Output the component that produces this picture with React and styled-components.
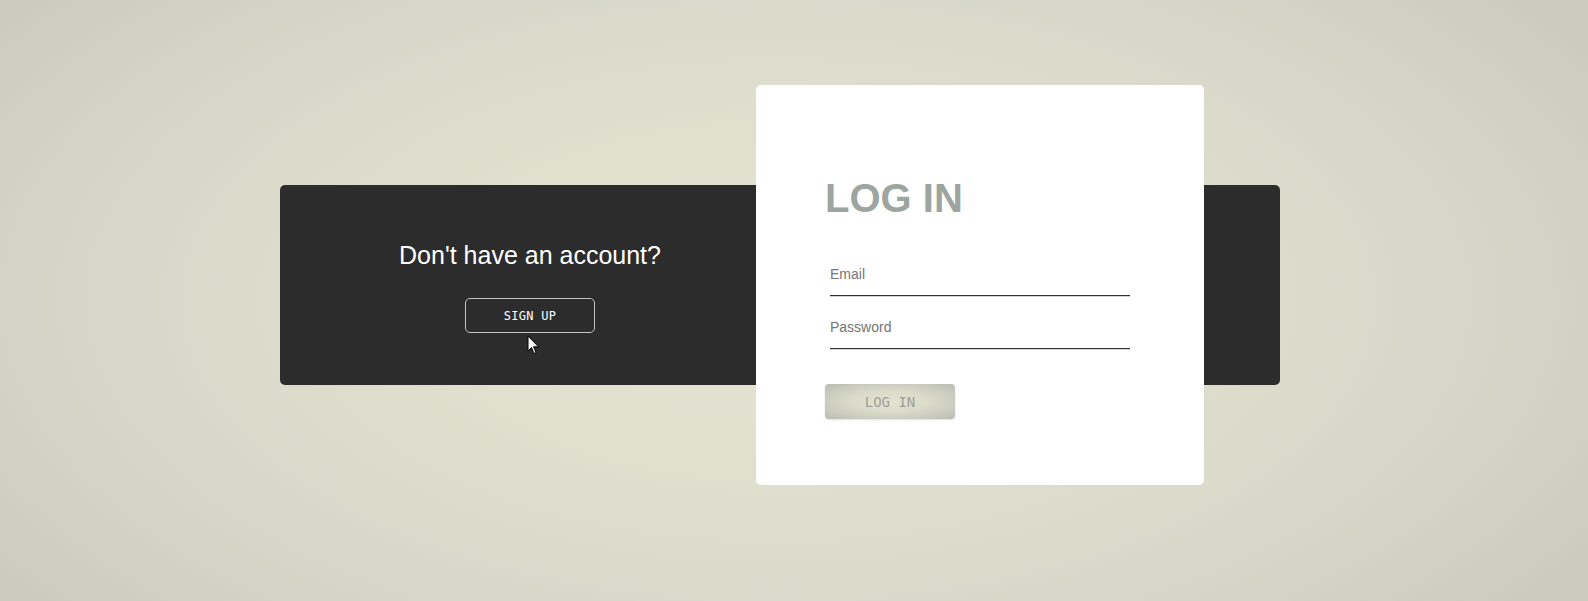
import React from 'react';
import styled, { createGlobalStyle } from 'styled-components';

const GlobalStyle = createGlobalStyle`
  html, body, #root {
    margin: 0;
    height: 100%;
  }
  body {
    font-family: 'Liberation Sans', Arial, sans-serif;
  }
`;

const Page = styled.div`
  box-sizing: border-box;
  height: 100vh;
  padding: 185px 0 0 280px;
  background: radial-gradient(
    ellipse 60% 80% at 49% 50%,
    #e3e2d2 0%,
    #e1e0cf 35%,
    #dbdacb 58%,
    #d3d4c7 80%,
    #cbccbf 100%
  );
  overflow: hidden;
`;

const Panel = styled.div`
  position: relative;
  width: 1000px;
  height: 200px;
  border-radius: 5px;
  background: #2c2c2c;
  display: grid;
  grid-template-columns: 500px 500px;
`;

const Side = styled.div`
  display: flex;
  flex-direction: column;
  align-items: center;
  padding-top: 56px;
`;

const Prompt = styled.h2`
  margin: 0;
  font-family: 'Liberation Sans', Arial, sans-serif;
  font-size: 25px;
  font-weight: 400;
  color: #ffffff;
`;

const OutlineButton = styled.button`
  margin-top: 28px;
  width: 130px;
  height: 35px;
  border: 1px solid #c4c4c4;
  border-radius: 5px;
  background: transparent;
  color: #ffffff;
  font-family: 'DejaVu Sans Mono', monospace;
  font-size: 12px;
  letter-spacing: 0.3px;
  cursor: pointer;
`;

const Card = styled.form`
  position: absolute;
  left: 476px;
  top: -100px;
  box-sizing: border-box;
  width: 448px;
  height: 400px;
  padding-left: 69px;
  border-radius: 5px;
  background: #ffffff;
  display: flex;
  flex-direction: column;
  align-items: flex-start;
`;

const Title = styled.h1`
  margin: 91px 0 0;
  font-family: 'Liberation Sans', Arial, sans-serif;
  font-size: 40px;
  font-weight: 700;
  color: #9ca5a0;
`;

const Field = styled.input`
  box-sizing: content-box;
  width: 300px;
  margin: ${p => (p.$first ? '33px' : '11px')} 0 0 5px;
  padding: 12px 0 13px;
  border: none;
  border-bottom: 1px solid #333333;
  box-shadow: 0 1px 0 #d4d4d4;
  outline: none;
  background: transparent;
  font-family: 'Liberation Sans', Arial, sans-serif;
  font-size: 14px;
  color: #333;
  &::placeholder {
    color: #757575;
  }
`;

const SubmitButton = styled.button`
  margin-top: 35px;
  width: 130px;
  height: 35px;
  border: none;
  border-radius: 4px;
  background: radial-gradient(
    ellipse at center,
    #e4e3d1 0%,
    #dcdccb 40%,
    #c9cbbe 75%,
    #b8bbb2 100%
  );
  box-shadow: 0 1px 2px rgba(0, 0, 0, 0.12);
  color: #9aa09c;
  font-family: 'DejaVu Sans Mono', monospace;
  font-size: 14px;
  cursor: pointer;
`;

const Pointer = styled.svg`
  position: absolute;
  left: 247px;
  top: 150px;
  width: 13px;
  height: 20px;
  pointer-events: none;
`;

export default function App() {
  return (
    <>
      <GlobalStyle />
      <Page>
        <Panel>
          <Side>
            <Prompt>Don't have an account?</Prompt>
            <OutlineButton type="button">SIGN UP</OutlineButton>
          </Side>
          <Side />
          <Pointer viewBox="0 0 13 20">
            <path
              d="M1 1 L1 16 L4.5 12.5 L7 18.5 L9 17.6 L6.6 11.8 L11.5 11.8 Z"
              fill="#ffffff"
              stroke="#000000"
              strokeWidth="1"
              strokeLinejoin="miter"
            />
          </Pointer>
          <Card onSubmit={e => e.preventDefault()}>
            <Title>LOG IN</Title>
            <Field $first type="email" placeholder="Email" />
            <Field type="password" placeholder="Password" />
            <SubmitButton type="submit">LOG IN</SubmitButton>
          </Card>
        </Panel>
      </Page>
    </>
  );
}
